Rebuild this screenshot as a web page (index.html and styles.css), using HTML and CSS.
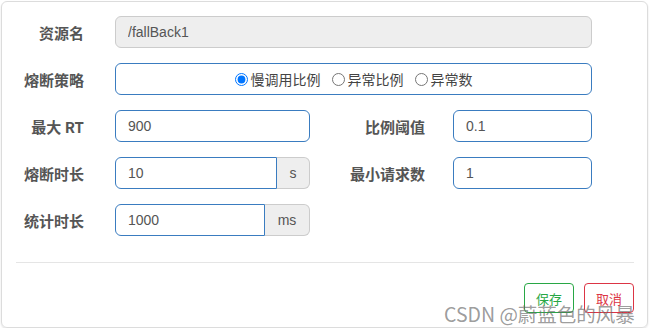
FILE: index.html
```html
<!DOCTYPE html>
<html>
<head>
  <meta charset="utf-8">
  <title>熔断规则</title>
  <link rel="stylesheet" href="styles.css">
</head>
<body>
  <div class="panel">
    <form class="rule-form">
      <div class="form-row">
        <label class="label">资源名</label>
        <input class="input wide" type="text" value="/fallBack1" disabled>
      </div>
      <div class="form-row">
        <label class="label">熔断策略</label>
        <div class="input wide radios">
          <label class="radio"><input type="radio" name="strategy" checked> 慢调用比例</label>
          <label class="radio"><input type="radio" name="strategy"> 异常比例</label>
          <label class="radio"><input type="radio" name="strategy"> 异常数</label>
        </div>
      </div>
      <div class="form-row">
        <label class="label">最大 RT</label>
        <input class="input half" type="text" value="900">
        <label class="label label-right">比例阈值</label>
        <input class="input small" type="text" value="0.1">
      </div>
      <div class="form-row">
        <label class="label">熔断时长</label>
        <div class="input-group">
          <input class="input grouped" type="text" value="10">
          <span class="addon">s</span>
        </div>
        <label class="label label-right">最小请求数</label>
        <input class="input small" type="text" value="1">
      </div>
      <div class="form-row">
        <label class="label">统计时长</label>
        <div class="input-group">
          <input class="input grouped" type="text" value="1000">
          <span class="addon addon-ms">ms</span>
        </div>
      </div>
    </form>
    <hr class="divider">
    <div class="actions">
      <button class="btn btn-save">保存</button>
      <button class="btn btn-cancel">取消</button>
    </div>
    <div class="watermark">CSDN @蔚蓝色的风暴</div>
  </div>
</body>
</html>
```

FILE: styles.css
```css
body {
  margin: 0;
  background: #fff;
  font-family: "Liberation Sans", "Noto Sans CJK SC", sans-serif;
  font-size: 14px;
  color: #555;
}
.panel {
  position: relative;
  box-sizing: border-box;
  width: 647px;
  height: 327px;
  margin: 1px 0 0 1px;
  padding: 14px 13px 0 14px;
  border: 1px solid #dcdcdc;
  border-radius: 6px;
  box-shadow: 0 1px 2px rgba(0,0,0,0.12);
}
.form-row {
  display: flex;
  align-items: center;
  margin-bottom: 15px;
}
.label {
  width: 68px;
  margin-right: 31px;
  text-align: right;
  font-family: "Noto Sans CJK SC", sans-serif;
  font-weight: bold;
  font-size: 15px;
  color: #555;
}
.label-right {
  width: 115px;
  margin-right: 28px;
}
.input {
  box-sizing: border-box;
  height: 32px;
  padding: 0 12px;
  border: 1px solid #3a7cc0;
  border-radius: 6px;
  font-family: "Liberation Sans", "Noto Sans CJK SC", sans-serif;
  font-size: 14px;
  color: #555;
  background: #fff;
  outline: none;
}
.input[disabled] {
  background: #eee;
  border-color: #ccc;
}
.wide { width: 477px; }
.half { width: 195px; }
.small { width: 139px; }
.radios {
  display: flex;
  align-items: center;
  justify-content: center;
  gap: 11px;
  font-family: "Noto Sans CJK SC", sans-serif;
  color: #444;
}
.radio {
  display: flex;
  align-items: center;
}
.radio input {
  width: 13px;
  height: 13px;
  margin: 0 3px 0 0;
}
.input-group {
  display: flex;
  width: 195px;
}
.input-group .grouped {
  flex: 1;
  min-width: 0;
  border-radius: 6px 0 0 6px;
}
.addon {
  box-sizing: border-box;
  width: 33px;
  height: 32px;
  line-height: 30px;
  text-align: center;
  background: #eee;
  border: 1px solid #ccc;
  border-left: 0;
  border-radius: 0 6px 6px 0;
  color: #555;
}
.addon-ms { width: 45px; }
.divider {
  margin: 26px 0 20px;
  border: 0;
  border-top: 1px solid #e5e5e5;
}
.actions {
  display: flex;
  justify-content: flex-end;
  gap: 10px;
}
.btn {
  box-sizing: border-box;
  width: 50px;
  height: 30px;
  padding: 0;
  background: #fff;
  border: 1px solid;
  border-radius: 4px;
  font-family: "Noto Sans CJK SC", sans-serif;
  font-size: 13px;
}
.btn-save { color: #28a745; border-color: #28a745; }
.btn-cancel { color: #dc3545; border-color: #dc3545; }
.watermark {
  position: absolute;
  left: 442px;
  top: 297px;
  font-family: "Noto Sans CJK SC", sans-serif;
  font-size: 19.5px;
  color: rgba(100,100,100,0.65);
  white-space: nowrap;
}
```
